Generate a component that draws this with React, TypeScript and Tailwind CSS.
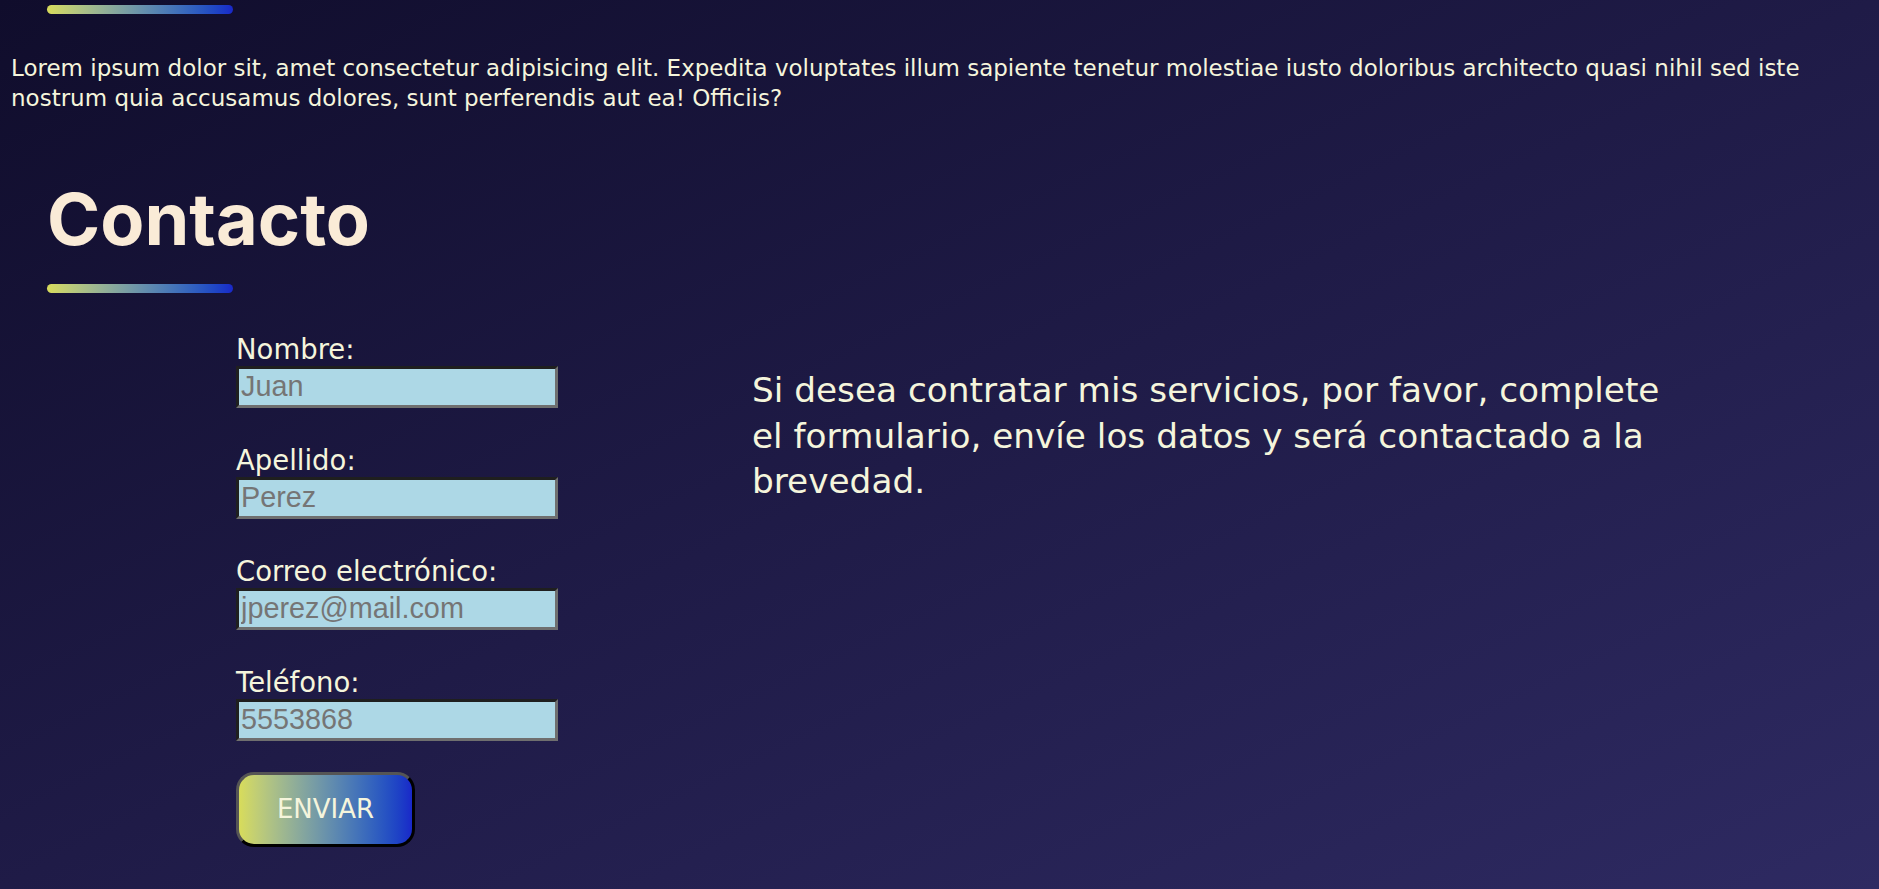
import React from 'react'

const fields = [
  { id: 'nombre', label: 'Nombre:', placeholder: 'Juan', type: 'text' },
  { id: 'apellido', label: 'Apellido:', placeholder: 'Perez', type: 'text' },
  { id: 'correo', label: 'Correo electrónico:', placeholder: 'jperez@mail.com', type: 'email' },
  { id: 'telefono', label: 'Teléfono:', placeholder: '5553868', type: 'tel' },
]

function GradientBar() {
  return <div className="h-[9px] w-[186px] rounded-full bg-gradient-to-r from-[#d8dc5a] to-[#1a27c9]" />
}

export default function App() {
  return (
    <div className="min-h-[889px] w-full overflow-hidden bg-gradient-to-br from-[#100d2c] via-[#1f1b47] to-[#2e2a62] font-['DejaVu_Sans',sans-serif] text-[#f5f5dc]">
      <div className="pl-[47px] pt-[5px]">
        <GradientBar />
      </div>

      <p className="mt-[39px] pl-[11px] pr-[30px] text-[23px] leading-[30px]">
        Lorem ipsum dolor sit, amet consectetur adipisicing elit. Expedita voluptates illum sapiente tenetur molestiae
        iusto doloribus architecto quasi nihil sed iste nostrum quia accusamus dolores, sunt perferendis aut ea! Officiis?
      </p>

      <section className="mt-[70px] pl-[47px]">
        <h2 className="font-['Inter',sans-serif] text-[72px] font-bold leading-none text-[#faebd7]">Contacto</h2>
        <div className="mt-[29px]">
          <GradientBar />
        </div>
      </section>

      <div className="mt-[41px] flex pl-[236px]">
        <form className="flex w-[322px] flex-col" onSubmit={(e) => e.preventDefault()}>
          {fields.map((f) => (
            <div key={f.id} className="mb-[37px] flex flex-col">
              <label htmlFor={f.id} className="mb-[2px] text-[27.5px] leading-[30px] whitespace-nowrap">
                {f.label}
              </label>
              <input
                id={f.id}
                type={f.type}
                placeholder={f.placeholder}
                className="h-[42px] w-[322px] border-[3px] border-t-[#1f1f1f] border-l-[#1f1f1f] border-r-[#6f6f6f] border-b-[#6f6f6f] bg-[#add8e6] px-[2px] font-['Liberation_Sans',Arial,sans-serif] text-[28.8px] text-[#222] placeholder:text-[#757575] outline-none"
              />
            </div>
          ))}
          <button
            type="submit"
            className="-mt-[6px] h-[75px] w-[179px] rounded-[18px] border-[3px] border-t-[#555] border-l-[#555] border-r-black border-b-black bg-gradient-to-r from-[#d8dc5a] to-[#1a27c9] text-[26px] text-[#f5f5dc]"
          >
            ENVIAR
          </button>
        </form>

        <p className="ml-[194px] w-[920px] pt-[34px] text-[34.3px] leading-[45.5px]">
          Si desea contratar mis servicios, por favor, complete el formulario, envíe los datos y será contactado a la
          brevedad.
        </p>
      </div>
    </div>
  )
}
